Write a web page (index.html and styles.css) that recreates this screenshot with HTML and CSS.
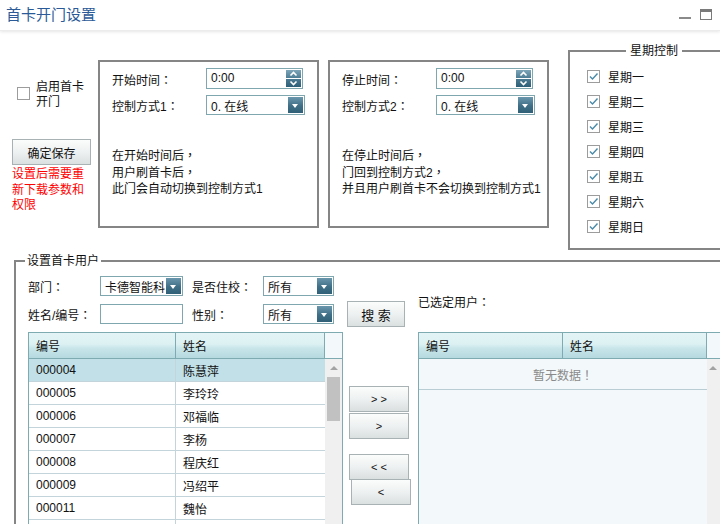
FILE: index.html
```html
<!DOCTYPE html>
<html lang="zh">
<head>
<meta charset="utf-8">
<title>首卡开门设置</title>
<link rel="stylesheet" href="styles.css">
</head>
<body>
<div class="page">
  <div class="titlebar">
    <span class="title">首卡开门设置</span>
    <div class="win-ctrls"><span class="wmin"></span><span class="wmax"></span></div>
  </div>

  <div class="top">
    <div class="leftcol">
      <div class="enable">
        <span class="cb"></span>
        <span class="enable-text">启用首卡开门</span>
      </div>
      <button class="btn save">确定保存</button>
      <p class="note">设置后需要重新下载参数和权限</p>
    </div>

    <div class="box">
      <div class="frow">
        <span class="flabel">开始时间<span class="pn">：</span></span>
        <div class="field spin"><span class="val">0:00</span>
          <span class="spin-btns">
            <i class="sb up"><svg width="15" height="8" viewBox="0 0 15 8"><path d="M4.5 5.5 L7.5 2.5 L10.5 5.5" fill="none" stroke="#fff" stroke-width="1.6"/></svg></i>
            <i class="sb down"><svg width="15" height="8" viewBox="0 0 15 8"><path d="M4.5 2.5 L7.5 5.5 L10.5 2.5" fill="none" stroke="#fff" stroke-width="1.6"/></svg></i>
          </span>
        </div>
      </div>
      <div class="frow">
        <span class="flabel">控制方式1<span class="pn">：</span></span>
        <div class="field select sel-wide"><span class="val">0. 在线</span><i class="dd"></i></div>
      </div>
      <p class="desc">在开始时间后<span class="pn">，</span><br>用户刷首卡后<span class="pn">，</span><br>此门会自动切换到控制方式1</p>
    </div>

    <div class="box box2">
      <div class="frow">
        <span class="flabel">停止时间<span class="pn">：</span></span>
        <div class="field spin"><span class="val">0:00</span>
          <span class="spin-btns">
            <i class="sb up"><svg width="15" height="8" viewBox="0 0 15 8"><path d="M4.5 5.5 L7.5 2.5 L10.5 5.5" fill="none" stroke="#fff" stroke-width="1.6"/></svg></i>
            <i class="sb down"><svg width="15" height="8" viewBox="0 0 15 8"><path d="M4.5 2.5 L7.5 5.5 L10.5 2.5" fill="none" stroke="#fff" stroke-width="1.6"/></svg></i>
          </span>
        </div>
      </div>
      <div class="frow">
        <span class="flabel">控制方式2<span class="pn">：</span></span>
        <div class="field select sel-wide"><span class="val">0. 在线</span><i class="dd"></i></div>
      </div>
      <p class="desc">在停止时间后<span class="pn">，</span><br>门回到控制方式2<span class="pn">，</span><br>并且用户刷首卡不会切换到控制方式1</p>
    </div>

    <fieldset class="week">
      <legend>星期控制</legend>
      <div class="wk"><span class="cb on"><svg width="11" height="11" viewBox="0 0 11 11"><path d="M2 5.5 L4.5 8 L9.5 2.5" fill="none" stroke="#4a8aa8" stroke-width="1.4"/></svg></span>星期一</div>
      <div class="wk"><span class="cb on"><svg width="11" height="11" viewBox="0 0 11 11"><path d="M2 5.5 L4.5 8 L9.5 2.5" fill="none" stroke="#4a8aa8" stroke-width="1.4"/></svg></span>星期二</div>
      <div class="wk"><span class="cb on"><svg width="11" height="11" viewBox="0 0 11 11"><path d="M2 5.5 L4.5 8 L9.5 2.5" fill="none" stroke="#4a8aa8" stroke-width="1.4"/></svg></span>星期三</div>
      <div class="wk"><span class="cb on"><svg width="11" height="11" viewBox="0 0 11 11"><path d="M2 5.5 L4.5 8 L9.5 2.5" fill="none" stroke="#4a8aa8" stroke-width="1.4"/></svg></span>星期四</div>
      <div class="wk"><span class="cb on"><svg width="11" height="11" viewBox="0 0 11 11"><path d="M2 5.5 L4.5 8 L9.5 2.5" fill="none" stroke="#4a8aa8" stroke-width="1.4"/></svg></span>星期五</div>
      <div class="wk"><span class="cb on"><svg width="11" height="11" viewBox="0 0 11 11"><path d="M2 5.5 L4.5 8 L9.5 2.5" fill="none" stroke="#4a8aa8" stroke-width="1.4"/></svg></span>星期六</div>
      <div class="wk"><span class="cb on"><svg width="11" height="11" viewBox="0 0 11 11"><path d="M2 5.5 L4.5 8 L9.5 2.5" fill="none" stroke="#4a8aa8" stroke-width="1.4"/></svg></span>星期日</div>
    </fieldset>
  </div>

  <fieldset class="users">
    <legend>设置首卡用户</legend>
    <div class="urow">
      <span class="ulabel">部门<span class="pn">：</span></span>
      <div class="field select s83"><span class="val">卡德智能科</span><i class="dd"></i></div>
      <span class="ulabel2">是否住校<span class="pn">：</span></span>
      <div class="field select s71"><span class="val">所有</span><i class="dd"></i></div>
    </div>
    <div class="urow urow2">
      <span class="ulabel">姓名/编号<span class="pn">：</span></span>
      <div class="field s83"></div>
      <span class="ulabel2">性别<span class="pn">：</span></span>
      <div class="field select s71"><span class="val">所有</span><i class="dd"></i></div>
      <button class="btn search">搜 索</button>
      <span class="chosen">已选定用户<span class="pn">：</span></span>
    </div>

    <div class="lower">
      <div class="grid gleft">
        <div class="gmain">
          <div class="grow head"><div class="c1">编号</div><div class="c2">姓名</div></div>
          <div class="grow selrow"><div class="c1">000004</div><div class="c2">陈慧萍</div></div>
          <div class="grow"><div class="c1">000005</div><div class="c2">李玲玲</div></div>
          <div class="grow"><div class="c1">000006</div><div class="c2">邓福临</div></div>
          <div class="grow"><div class="c1">000007</div><div class="c2">李杨</div></div>
          <div class="grow"><div class="c1">000008</div><div class="c2">程庆红</div></div>
          <div class="grow"><div class="c1">000009</div><div class="c2">冯绍平</div></div>
          <div class="grow"><div class="c1">000011</div><div class="c2">魏怡</div></div>
          <div class="grow"><div class="c1"></div><div class="c2"></div></div>
        </div>
        <div class="vscroll">
          <div class="vs-head"></div>
          <div class="vs-track"><i class="vs-up"></i><i class="vs-thumb"></i></div>
        </div>
      </div>

      <div class="movebtns">
        <button class="btn mv">&gt; &gt;</button>
        <button class="btn mv">&gt;</button>
        <button class="btn mv mv3">&lt; &lt;</button>
        <button class="btn mv mv4">&lt;</button>
      </div>

      <div class="grid gright">
        <div class="gmain">
          <div class="grow head"><div class="c1">编号</div><div class="c2">姓名</div></div>
          <div class="empty">暂无数据<span class="pn">！</span></div>
        </div>
        <div class="vscroll">
          <div class="vs-head"></div>
          <div class="vs-track"><i class="vs-up"></i></div>
        </div>
      </div>
    </div>
  </fieldset>
</div>
</body>
</html>
```

FILE: styles.css
```css
* { box-sizing: border-box; }
html, body { margin: 0; padding: 0; }
body {
  width: 720px;
  height: 524px;
  overflow: hidden;
  background: #fff;
  font-family: "Liberation Sans", "Noto Sans CJK SC", sans-serif;
  font-size: 12px;
  color: #111;
  text-spacing-trim: space-all;
}
.page { width: 720px; }
.pn {
  font-family: "Noto Sans CJK TC", "Noto Sans CJK SC", sans-serif;
  text-spacing-trim: space-all;
  display: inline-block;
  width: 12px;
  text-align: center;
}

/* title bar */
.titlebar {
  height: 31px;
  display: flex;
  align-items: center;
  justify-content: space-between;
  padding: 0 8px 0 6px;
  border-bottom: 1px solid #ececec;
  box-shadow: 0 1px 3px rgba(0,0,0,0.10);
}
.title { font-size: 15px; color: #2b5a98; line-height: 20px; margin-top: -1px; }
.win-ctrls { display: flex; align-items: center; gap: 9px; margin-top: -2px; }
.wmin { width: 12px; height: 2px; background: #8a8a8a; margin-top: 7px; }
.wmax { width: 12px; height: 11px; border: 1px solid #7a7a7a; border-top-width: 3px; }

/* top section */
.top { display: flex; align-items: flex-start; height: 222px; }
.leftcol { width: 98px; flex-shrink: 0; padding: 49px 0 0 12px; }
.enable { display: flex; align-items: flex-start; padding-left: 5px; }
.enable .cb { margin-top: 7px; margin-right: 6px; }
.enable-text { width: 52px; line-height: 15px; }
.cb {
  width: 13px; height: 13px;
  border: 1px solid #9c9c9c;
  background: #fff;
  display: inline-flex; align-items: center; justify-content: center;
  flex-shrink: 0;
}
.btn {
  font-family: inherit;
  font-size: 12px;
  color: #111;
  border: 1px solid #a8b2b4;
  background: linear-gradient(#fbfcfc, #eef1f1 50%, #dadfe0);
  padding: 0;
  cursor: pointer;
}
.save { display: block; width: 79px; height: 26px; margin-top: 29px; }
.note { color: #f00; margin: 2px 0 0; width: 78px; line-height: 15.5px; }

.box {
  width: 221px; height: 168px;
  margin-top: 29px;
  border: 2px solid #858585;
  padding: 7px 0 0 12px;
  flex-shrink: 0;
}
.box2 { margin-left: 9px; }
.frow { display: flex; align-items: center; height: 20px; }
.frow + .frow { margin-top: 6px; }
.flabel { width: 94px; }

.field {
  height: 20px;
  border: 1px solid #7fa7b0;
  background: #fff;
  display: flex; align-items: center;
  position: relative;
  padding-left: 4px;
}
.field .val { flex: 1; white-space: nowrap; overflow: hidden; }
.spin { width: 97px; height: 21px; margin-top: -2px; }
.spin-btns { display: flex; flex-direction: column; gap: 1px; margin-right: 1px; }
.sb { display: block; width: 15px; height: 8px; line-height: 0; }
.sb.up { background: linear-gradient(#7ea5b8, #4c7d95); }
.sb.down { background: linear-gradient(#4a7a92, #2d5f78); }
.select { padding-right: 1px; }
.sel-wide { width: 99px; }
.dd {
  display: block; width: 15px; height: 16px;
  background: linear-gradient(#6b97ad, #3f6f87 55%, #2f6078);
  position: relative;
}
.dd::after {
  content: "";
  position: absolute; left: 4px; top: 7px;
  border-left: 3.5px solid transparent;
  border-right: 3.5px solid transparent;
  border-top: 4px solid #fff;
}
.desc { margin: 32px 0 0; line-height: 16px; white-space: nowrap; }

/* week */
.week {
  flex-shrink: 0;
  width: 160px;
  height: 207px;
  margin: 12px 0 0 19px;
  border: 2px solid #858585;
  padding: 5px 0 0 17px;
  min-width: 0;
}
.week legend { margin-left: 39px; padding: 0 4px; line-height: 16px; }
.wk { display: flex; align-items: center; height: 25px; }
.wk .cb { margin-right: 8px; }

/* users */
.users {
  margin: 0 0 0 14px;
  width: 720px;
  border: 2px solid #858585;
  border-right: none;
  padding: 7px 0 0 12px;
  height: 300px;
  min-width: 0;
}
.users legend { margin-left: -3px; padding: 0 2px; line-height: 16px; }
.urow { display: flex; align-items: center; height: 20px; }
.urow2 { height: 26px; margin-top: 5px; }
.ulabel { width: 72px; }
.ulabel2 { width: 71px; margin-left: 9px; }
.s83 { width: 83px; }
.s71 { width: 71px; }
.urow .select .val { padding-top: 1px; }
.search { width: 58px; height: 26px; margin-left: 13px; font-size: 13px; }
.chosen { margin-left: 13px; align-self: flex-start; margin-top: -7px; line-height: 16px; }

.lower { display: flex; align-items: flex-start; margin-top: 5px; }
.grid { display: flex; border: 1px solid #7eaab2; border-bottom: none; height: 200px; overflow: hidden; flex-shrink: 0; }
.gleft { width: 315px; }
.gright { width: 310px; margin-left: 7px; border-right: none; }
.gmain { display: flex; flex-direction: column; flex-shrink: 0; }
.gleft .gmain { width: 296px; }
.gright .gmain { width: 288px; background: #f3f8fa; }
.grow { display: flex; height: 23px; flex-shrink: 0; border-bottom: 1px solid #c3d4db; }
.grow > div { display: flex; align-items: center; padding-left: 7px; }
.gleft .c1 { width: 147px; border-right: 1px solid #c3d4db; }
.gleft .c2 { width: 149px; }
.gright .c1 { width: 144px; }
.gright .c2 { width: 144px; }
.grow.head {
  height: 26px;
  background: linear-gradient(#e4f4f6, #dcf0f2 45%, #c9e6ea 60%, #b5d9df);
  border-bottom: 1px solid #7eaab2;
}
.grow.head .c1 { border-right: 1px solid #7eaab2; }
.grow.head .c2 { border-right: 1px solid #7eaab2; }
.selrow { background: #c1e0e7; }
.empty {
  height: 31px;
  flex-shrink: 0;
  border-bottom: 1px solid #b9cdd5;
  display: flex; align-items: center; justify-content: center;
  color: #8a8a8a;
}
.vscroll { flex: 1; display: flex; flex-direction: column; }
.vs-head { height: 26px; flex-shrink: 0; background: #f3f8fa; border-bottom: 1px solid #7eaab2; }
.vs-track { flex: 1; background: #f0f0f0; display: flex; flex-direction: column; align-items: center; padding-top: 7px; }
.vs-up {
  width: 0; height: 0;
  border-left: 4px solid transparent;
  border-right: 4px solid transparent;
  border-bottom: 4px solid #a3a3a3;
}
.vs-thumb { width: 13px; height: 44px; background: #c1c1c1; margin-top: 7px; }
.gright .vs-track { align-items: flex-start; padding-left: 2px; }

.movebtns { width: 62px; margin-left: 6px; padding-top: 54px; display: flex; flex-direction: column; align-items: flex-start; }
.mv { width: 60px; height: 26px; font-size: 11px; }
.mv + .mv { margin-top: 1px; }
.mv3 { margin-top: 15px !important; }
.mv4 { margin-left: 2px; margin-top: -1px !important; }
```
